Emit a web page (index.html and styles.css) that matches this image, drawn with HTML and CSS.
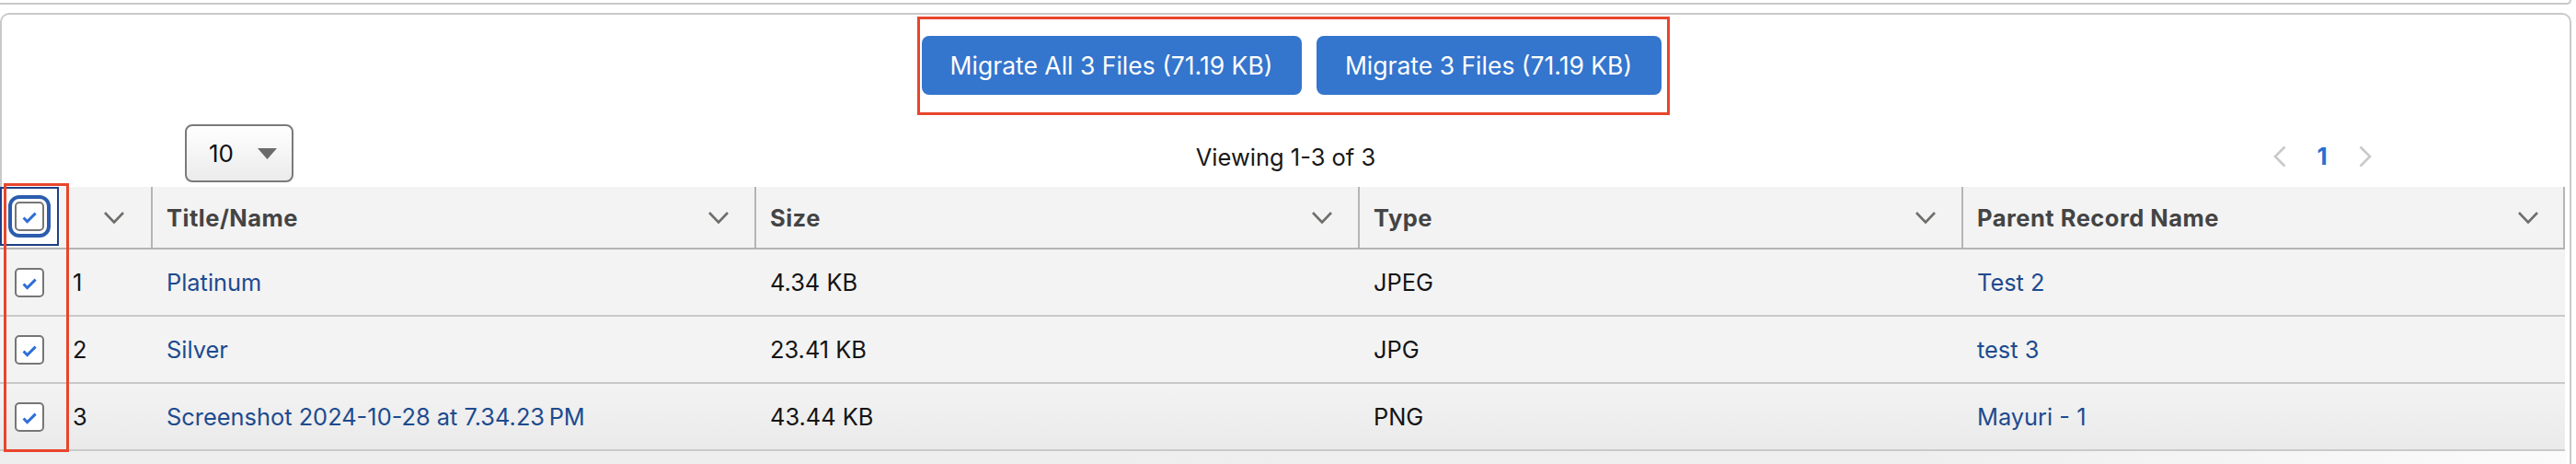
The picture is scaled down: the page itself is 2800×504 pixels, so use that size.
FILE: index.html
```html
<!DOCTYPE html>
<html lang="en">
<head>
<meta charset="utf-8">
<title>Migrate Files</title>
<link rel="stylesheet" href="styles.css">
</head>
<body>
<div class="prev-card"></div>
<div class="card">
  <div class="actions">
    <button class="btn btn-all">Migrate All 3 Files (71.19 KB)</button>
    <button class="btn btn-sel">Migrate 3 Files (71.19 KB)</button>
  </div>
  <div class="toolbar">
    <div class="page-size">
      <span>10</span>
      <svg class="caret" width="21" height="12" viewBox="0 0 21 12"><polygon points="0,0 21,0 10.5,12" fill="#6b6b6b"/></svg>
    </div>
    <div class="viewing">Viewing 1-3 of 3</div>
    <div class="pager">
      <svg width="14" height="24" viewBox="0 0 14 24"><polyline points="12.5,1.5 2,12 12.5,22.5" fill="none" stroke="#c9c9c9" stroke-width="2.6"/></svg>
      <span class="pager-current">1</span>
      <svg width="14" height="24" viewBox="0 0 14 24"><polyline points="1.5,1.5 12,12 1.5,22.5" fill="none" stroke="#c9c9c9" stroke-width="2.6"/></svg>
    </div>
  </div>
  <div class="table">
    <div class="tr thead">
      <div class="th th-select">
        <div class="focus-cell">
          <span class="checkbox checkbox-focus"><svg width="28" height="28" viewBox="0 0 28 28"><path d="M6.5 16.6 L8.6 14.6 L11.6 17.6 L19.6 9.6 L21.7 11.7 L11.6 21.8 Z" fill="#2e6fd6"/></svg></span>
        </div>
        <svg class="chev" width="22" height="13" viewBox="0 0 22 13"><polyline points="1,1 11,11.5 21,1" fill="none" stroke="#706e6b" stroke-width="2.6"/></svg>
      </div>
      <div class="th"><span>Title/Name</span><svg class="chev" width="22" height="13" viewBox="0 0 22 13"><polyline points="1,1 11,11.5 21,1" fill="none" stroke="#706e6b" stroke-width="2.6"/></svg></div>
      <div class="th"><span>Size</span><svg class="chev" width="22" height="13" viewBox="0 0 22 13"><polyline points="1,1 11,11.5 21,1" fill="none" stroke="#706e6b" stroke-width="2.6"/></svg></div>
      <div class="th"><span>Type</span><svg class="chev" width="22" height="13" viewBox="0 0 22 13"><polyline points="1,1 11,11.5 21,1" fill="none" stroke="#706e6b" stroke-width="2.6"/></svg></div>
      <div class="th th-last"><span>Parent Record Name</span><svg class="chev" width="22" height="13" viewBox="0 0 22 13"><polyline points="1,1 11,11.5 21,1" fill="none" stroke="#706e6b" stroke-width="2.6"/></svg></div>
    </div>
    <div class="tr">
      <div class="td td-select"><span class="checkbox"><svg width="28" height="28" viewBox="0 0 28 28"><path d="M6.5 16.6 L8.6 14.6 L11.6 17.6 L19.6 9.6 L21.7 11.7 L11.6 21.8 Z" fill="#2e6fd6"/></svg></span><span class="rownum">1</span></div>
      <div class="td"><a class="link">Platinum</a></div>
      <div class="td">4.34 KB</div>
      <div class="td">JPEG</div>
      <div class="td"><a class="link">Test 2</a></div>
    </div>
    <div class="tr">
      <div class="td td-select"><span class="checkbox"><svg width="28" height="28" viewBox="0 0 28 28"><path d="M6.5 16.6 L8.6 14.6 L11.6 17.6 L19.6 9.6 L21.7 11.7 L11.6 21.8 Z" fill="#2e6fd6"/></svg></span><span class="rownum">2</span></div>
      <div class="td"><a class="link">Silver</a></div>
      <div class="td">23.41 KB</div>
      <div class="td">JPG</div>
      <div class="td"><a class="link">test 3</a></div>
    </div>
    <div class="tr tr-last">
      <div class="td td-select"><span class="checkbox"><svg width="28" height="28" viewBox="0 0 28 28"><path d="M6.5 16.6 L8.6 14.6 L11.6 17.6 L19.6 9.6 L21.7 11.7 L11.6 21.8 Z" fill="#2e6fd6"/></svg></span><span class="rownum">3</span></div>
      <div class="td"><a class="link">Screenshot 2024-10-28 at 7.34.23&#8239;PM</a></div>
      <div class="td">43.44 KB</div>
      <div class="td">PNG</div>
      <div class="td"><a class="link">Mayuri - 1</a></div>
    </div>
  </div>
  <div class="table-foot"></div>
</div>
<div class="annot annot-buttons"></div>
<div class="annot annot-checks"></div>
</body>
</html>
```
FILE: styles.css
```css
* { box-sizing: border-box; }

html, body {
  margin: 0;
  height: 504px;
  overflow: hidden;
  background: #ffffff;
}

body {
  position: relative;
  font-family: Inter, "Noto Sans", sans-serif;
  color: #181818;
}

.prev-card {
  width: 2795px;
  height: 5px;
  border: 2px solid #c9c9c9;
  border-top: none;
  border-left: none;
  border-radius: 0 0 8px 0;
}

.card {
  margin-top: 9px;
  width: 2795px;
  height: 490px;
  border: 2px solid #c9c9c9;
  border-bottom: none;
  border-radius: 10px 10px 0 0;
}

.actions {
  display: flex;
  justify-content: center;
  gap: 16px;
  padding-top: 23px;
  padding-left: 12px;
}

.btn {
  height: 64px;
  padding: 0;
  border: none;
  border-radius: 8px;
  background: #3475cd;
  color: #ffffff;
  font-family: Inter, "Noto Sans", sans-serif;
  font-size: 26.5px;
  font-weight: 400;
}

.btn-all { width: 413px; }
.btn-sel { width: 375px; }

.toolbar {
  display: grid;
  grid-template-columns: 1fr 196px 1fr;
  align-items: center;
  margin-top: 32px;
  height: 63px;
}

.page-size {
  margin-left: 199px;
  width: 118px;
  height: 63px;
  border: 2px solid #7a7a7a;
  border-radius: 8px;
  background: linear-gradient(#ffffff, #ebebeb);
  display: flex;
  align-items: center;
  justify-content: space-between;
  padding: 0 16px 0 24px;
  font-size: 26px;
  color: #111111;
}

.caret { margin-top: 1px; }

.viewing {
  text-align: center;
  white-space: nowrap;
  font-size: 25.5px;
  color: #181818;
  margin-top: 7px;
}

.pager {
  display: flex;
  align-items: center;
  gap: 34px;
  margin-left: 975px;
  margin-top: 6px;
}

.pager-current {
  color: #2a6fd1;
  font-weight: 700;
  font-size: 26px;
}

.table {
  margin: 5px 0 0 -2px;
  width: 2788px;
}

.tr {
  display: grid;
  grid-template-columns: 164px repeat(4, 656px);
  align-items: center;
  height: 73px;
  border-bottom: 2px solid #c9c9c9;
  background: #f3f3f3;
}

.thead {
  height: 68px;
  align-items: stretch;
  border-bottom-color: #b3b3b3;
}

.tr-last {
  background: linear-gradient(#f3f3f3, #eaeaea);
}

.th {
  display: flex;
  align-items: center;
  justify-content: space-between;
  padding: 0 28px 0 15px;
  border-left: 2px solid #b5b5b5;
  font-size: 25.5px;
  font-weight: 700;
  letter-spacing: 0.5px;
  color: #444444;
  white-space: nowrap;
}

.th-select {
  border-left: none;
  padding: 0 29px 0 0;
}

.th-last {
  border-right: 2px solid #b5b5b5;
  padding-right: 27px;
}

.focus-cell {
  align-self: flex-start;
  width: 64px;
  height: 64px;
  border: 2px solid #1e3f86;
  background: #ffffff;
  display: flex;
  align-items: center;
  justify-content: center;
}

.checkbox {
  display: block;
  flex: none;
  width: 32px;
  height: 32px;
  border: 2px solid #767676;
  border-radius: 5px;
  background: #ffffff;
}

.checkbox svg { display: block; }

.checkbox-focus {
  outline: 4px solid #2b5cae;
  outline-offset: 3px;
}

.td {
  padding-left: 17px;
  font-size: 25.4px;
  white-space: nowrap;
  color: #141414;
}

.td-select {
  padding-left: 16px;
  display: flex;
  align-items: center;
}

.rownum { margin-left: 31px; }

.link { color: #1d4b8f; }

.table-foot {
  margin-left: -2px;
  width: 2790px;
  height: 20px;
  background: linear-gradient(90deg, #eeeeee 0%, #efefef 75%, #fbfbfb 100%);
}

.annot {
  position: absolute;
  border: 3px solid #e8452c;
  pointer-events: none;
}

.annot-buttons {
  left: 997px;
  top: 18px;
  width: 818px;
  height: 107px;
}

.annot-checks {
  left: 4px;
  top: 199px;
  width: 71px;
  height: 292px;
}
```
